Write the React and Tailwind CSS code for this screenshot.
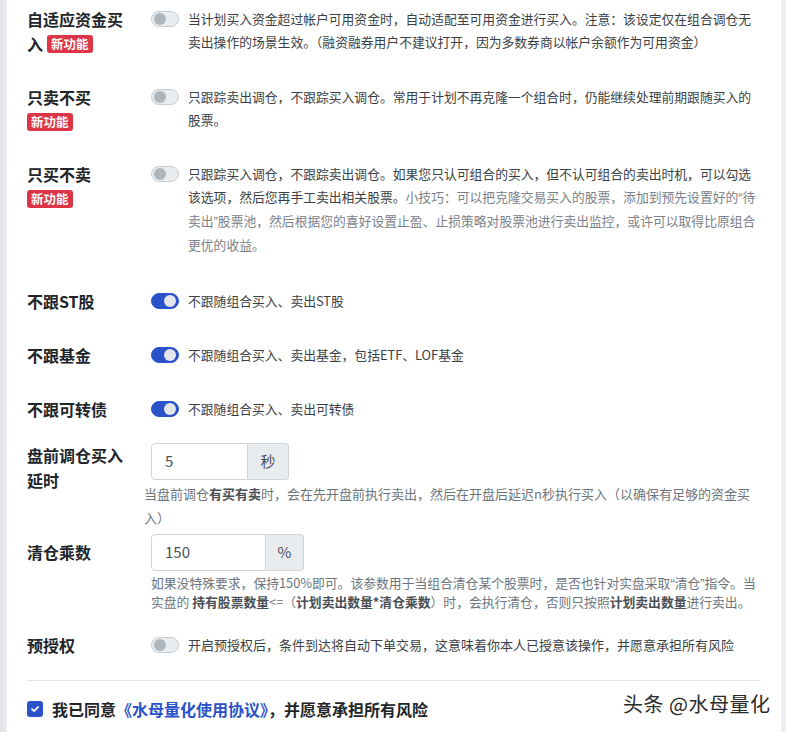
import React from "react";

function Badge({ className = "" }) {
  return (
    <span
      className={`items-center h-[18px] px-[4px] rounded-[3px] bg-[#dc3545] text-white text-[12.5px] font-bold leading-none ${className}`}
    >
      新功能
    </span>
  );
}

function Toggle({ on }) {
  return (
    <span
      className={
        on
          ? "relative shrink-0 block w-[28px] h-[16px] rounded-full border border-[#2a52c9] bg-[#2a52c9]"
          : "relative shrink-0 block w-[28px] h-[16px] rounded-full border border-[#c8cdd3] bg-[#e9ecef]"
      }
    >
      <span
        className={
          on
            ? "absolute top-[1px] right-[2px] w-[12px] h-[12px] rounded-full bg-[#e4e6eb]"
            : "absolute top-[1px] left-[2px] w-[12px] h-[12px] rounded-full bg-[#adb5bd]"
        }
      />
    </span>
  );
}

function ToggleRow({ label, on, children, className = "" }) {
  return (
    <div className={`flex items-start ${className}`}>
      <div className="w-[124px] shrink-0 pr-[18px] text-[16px] font-bold leading-[25px] text-[#212529]">
        {label}
      </div>
      <div className="flex-1 flex items-start gap-[9px]">
        <div className="mt-[4px]">
          <Toggle on={on} />
        </div>
        <div className="flex-1 text-[12.8px] leading-[23px] text-[#3b3f45]">
          {children}
        </div>
      </div>
    </div>
  );
}

function InputGroup({ value, unit, inputW, unitW }) {
  return (
    <div className="flex h-[37px]">
      <div
        className={`${inputW} flex items-center pl-[13px] border border-[#ced4da] rounded-l-[4px] text-[15px] text-[#495057] bg-white`}
      >
        {value}
      </div>
      <div
        className={`${unitW} flex items-center justify-center border border-l-0 border-[#ced4da] rounded-r-[4px] bg-[#e9ecef] text-[15px] text-[#495057]`}
      >
        {unit}
      </div>
    </div>
  );
}

function Q({ children }) {
  return <span className="font-['Liberation_Sans',sans-serif]">{children}</span>;
}

export default function App() {
  return (
    <div className="h-[732px] overflow-hidden flex bg-[#eceef2] font-['Noto_Sans_CJK_SC',sans-serif]">
      <div className="w-[7px] shrink-0 bg-[linear-gradient(to_right,#dfe1e6,#eceef1)]" />
      <div className="relative w-[774px] shrink-0 bg-white px-[20px] pt-[7px]">
        {/* 自适应资金买入 */}
        <ToggleRow
          on={false}
          label={
            <>
              自适应资金买入
              <Badge className="inline-flex ml-[4px] align-[2px]" />
            </>
          }
        >
          当计划买入资金超过帐户可用资金时，自动适配至可用资金进行买入。注意：该设定仅在组合调仓无卖出操作的场景生效。（融资融券用户不建议打开，因为多数券商以帐户余额作为可用资金）
        </ToggleRow>

        {/* 只卖不买 */}
        <ToggleRow
          className="mt-[28px]"
          on={false}
          label={
            <>
              <div>只卖不买</div>
              <Badge className="flex w-fit mt-[3px]" />
            </>
          }
        >
          只跟踪卖出调仓，不跟踪买入调仓。常用于计划不再克隆一个组合时，仍能继续处理前期跟随买入的股票。
        </ToggleRow>

        {/* 只买不卖 */}
        <ToggleRow
          className="mt-[31px]"
          on={false}
          label={
            <>
              <div>只买不卖</div>
              <Badge className="flex w-fit mt-[3px]" />
            </>
          }
        >
          只跟踪买入调仓，不跟踪卖出调仓。如果您只认可组合的买入，但不认可组合的卖出时机，可以勾选该选项，然后您再手工卖出相关股票。
          <span className="text-[#7b8189]">
            小技巧：可以把克隆交易买入的股票，添加到预先设置好的<Q>“</Q>待卖出<Q>”</Q>股票池，然后根据您的喜好设置止盈、止损策略对股票池进行卖出监控，或许可以取得比原组合更优的收益。
          </span>
        </ToggleRow>

        <ToggleRow className="mt-[33px]" on label="不跟ST股">
          不跟随组合买入、卖出ST股
        </ToggleRow>
        <ToggleRow className="mt-[29px]" on label="不跟基金">
          不跟随组合买入、卖出基金，包括ETF、LOF基金
        </ToggleRow>
        <ToggleRow className="mt-[29px]" on label="不跟可转债">
          不跟随组合买入、卖出可转债
        </ToggleRow>

        {/* 盘前调仓买入延时 */}
        <div className="flex items-start mt-[21px]">
          <div className="w-[124px] shrink-0 pr-[18px] text-[16px] font-bold leading-[25px] text-[#212529]">
            盘前调仓买入延时
          </div>
          <div className="flex-1">
            <InputGroup value="5" unit="秒" inputW="w-[97px]" unitW="w-[41px]" />
            <div className="mt-[2px] ml-[-7px] text-[13px] leading-[24px] text-[#6c757d] whitespace-nowrap">
              当盘前调仓<span className="font-semibold text-[#4a4f55]">有买有卖</span>
              时，会在先开盘前执行卖出，然后在开盘后延迟n秒执行买入（以确保有足够的资金买
              <br />
              入）
            </div>
          </div>
        </div>

        {/* 清仓乘数 */}
        <div className="flex items-start mt-[4px]">
          <div className="w-[124px] shrink-0 pt-[6px] pr-[18px] text-[16px] font-bold leading-[25px] text-[#212529]">
            清仓乘数
          </div>
          <div className="flex-1">
            <InputGroup value="150" unit="%" inputW="w-[115px]" unitW="w-[38px]" />
            <div className="mt-[3px] text-[12.8px] leading-[18px] text-[#6c757d] whitespace-nowrap">
              如果没特殊要求，保持150%即可。该参数用于当组合清仓某个股票时，是否也针对实盘采取<Q>“</Q>清仓<Q>”</Q>指令。当
              <br />
              实盘的 <span className="font-bold text-[#4a4f55]">持有股票数量</span>
              &lt;=（<span className="font-bold text-[#4a4f55]">计划卖出数量*清仓乘数</span>
              ）时，会执行清仓，否则只按照
              <span className="font-bold text-[#4a4f55]">计划卖出数量</span>进行卖出。
            </div>
          </div>
        </div>

        <ToggleRow className="mt-[22px]" on={false} label="预授权">
          <span className="text-[13px]">
            开启预授权后，条件到达将自动下单交易，这意味着你本人已授意该操作，并愿意承担所有风险
          </span>
        </ToggleRow>

        <hr className="mt-[22px] border-t border-[#dee2e6]" />

        <div className="mt-[16px] flex items-center gap-[9px]">
          <span className="w-[16px] h-[16px] rounded-[3px] bg-[#2a52c9] flex items-center justify-center">
            <svg width="10" height="10" viewBox="0 0 10 10" fill="none">
              <path
                d="M2 5.2 L4.1 7.2 L8 3"
                stroke="white"
                strokeWidth="1.8"
                strokeLinecap="round"
                strokeLinejoin="round"
              />
            </svg>
          </span>
          <span className="text-[16px] font-bold leading-[24px] text-[#212529]">
            我已同意<span className="text-[#2a52c9]">《水母量化使用协议》</span>，并愿意承担所有风险
          </span>
        </div>

        {/* watermark */}
        <div className="absolute left-[616px] top-[691px] text-[20px] leading-[26px] text-[#2b2b2b] [text-shadow:0_0_2px_#fff,0_0_2px_#fff] tracking-[0.5px]">
          头条 @水母量化
        </div>
      </div>
    </div>
  );
}
